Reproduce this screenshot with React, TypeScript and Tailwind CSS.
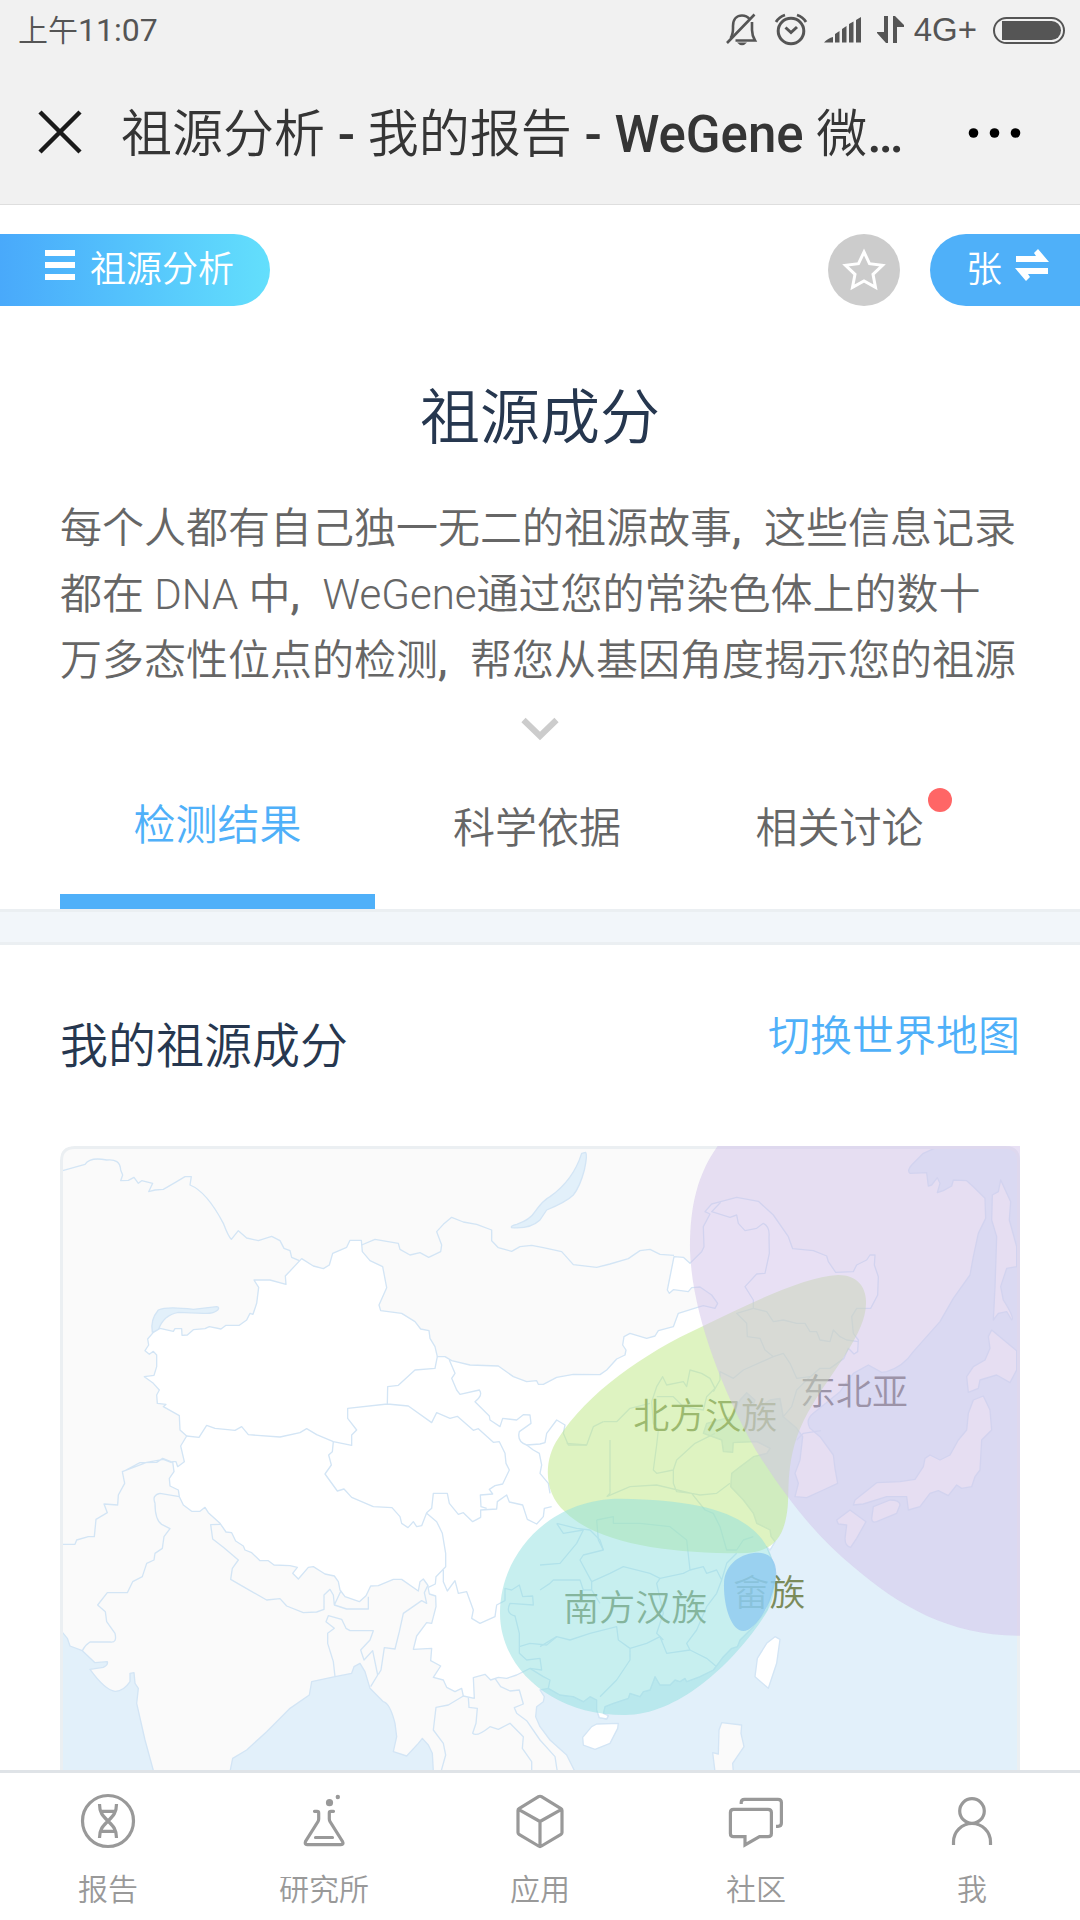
import React from "react";

const LINE = "#d3e5f5";
const SEA = "#e2f0fa";
const LAND = "#fafafa";

const MAINLAND =
  "M20 10H2660V22L2620 40L2585 75Q2570 92 2580 100L2630 98L2635 138L2645 135L2662 113L2670 130L2662 158L2680 152L2705 138L2710 120L2750 122L2770 140L2805 175L2807 235L2785 280L2770 350L2760 405L2710 475L2670 545L2590 635Q2560 680 2510 695L2495 697L2455 675L2410 700L2370 755L2290 820Q2265 840 2280 865L2310 890L2350 945L2355 985L2363 1030L2320 1050L2270 1073L2235 1070L2245 1030L2235 1000L2250 960L2258 890L2240 865L2200 830L2190 775L2160 780L2130 800L2110 795L2115 780L2090 758L2070 780L2045 830L1970 850L1960 880L2015 900L2020 935L2048 937L2050 908L2120 905L2160 925L2150 940L2110 950L2070 980L2045 1000L2042 1040L2080 1080L2110 1120L2120 1150L2160 1170L2163 1190L2175 1205L2160 1230L2150 1220L2170 1270L2178 1305L2150 1410L2110 1460L2070 1500L2062 1520L2045 1525L2020 1550L2005 1570L1990 1590L1950 1610L1910 1625L1905 1615L1890 1625L1875 1620L1860 1635L1830 1635L1815 1610L1800 1650L1780 1655L1770 1670L1740 1660L1735 1675L1690 1690L1665 1700L1660 1720L1675 1727L1670 1737L1648 1733L1640 1710V1680L1620 1670L1600 1685L1570 1670L1530 1665L1495 1645L1470 1650L1483 1670L1480 1685L1460 1700L1457 1730L1470 1760L1500 1800L1550 1845L1575 1895H1150L1147 1840L1135 1815L1117 1795L1105 1810L1070 1848L1030 1835L1040 1790L1035 1750Q1020 1690 1000 1685L960 1645L945 1595L930 1570L912 1580L905 1600L855 1610L785 1625L778 1665L720 1705L650 1775L590 1830L548 1855L540 1895H311L285 1800L260 1690L265 1645L255 1630L252 1598L240 1600V1625Q220 1655 195 1654Q165 1650 120 1588L160 1582Q175 1575 172 1565L135 1568L97 1532L60 1518L52 1495L38 1478H20Z";

const CHINA =
  "M310 577L330 565L370 574L375 566H395L396 586L412 585L430 569L465 566L478 560L513 567L528 556H568L590 540L600 520L609 523L620 490L626 442L612 420L660 420L708 433L706 408L755 356L790 378L820 386L838 375L848 340L890 322L900 301H934L937 335L960 362L998 380L1010 443L987 495L992 512L1055 520L1095 545L1112 567L1137 572L1140 595L1155 620L1162 650H1185L1205 662L1260 675L1345 678L1390 710L1430 725L1460 722L1465 733H1480L1520 712L1570 703L1650 704L1670 690L1700 657L1725 645L1728 630L1718 615L1722 590L1740 580L1790 595L1815 588L1825 572L1870 560L1885 520L1940 503L1960 497L1995 505L2003 490L1985 465L1950 441L1925 443L1915 455L1870 449L1858 460L1852 450L1872 350L1900 352L1920 370L1955 335L1962 320L1960 260L1980 222L1965 215L1985 192L2012 185L2060 172L2125 184L2170 225L2215 290L2228 326L2290 332L2330 348L2335 365L2357 397L2410 395L2420 375L2450 360L2460 345H2475L2473 375L2485 410L2483 465L2462 505H2420L2405 530L2410 580L2425 600L2423 635L2412 642L2395 625L2382 655L2340 685H2310L2270 720L2240 750L2225 800L2200 830L2190 775L2160 780L2130 800L2110 795L2115 780L2090 758L2070 780L2045 830L1970 850L1960 880L2015 900L2020 935L2048 937L2050 908L2120 905L2160 925L2150 940L2110 950L2070 980L2045 1000L2042 1040L2080 1080L2110 1120L2120 1150L2160 1170L2163 1190L2175 1205L2160 1230L2150 1220L2170 1270L2178 1305L2150 1410L2110 1460L2070 1500L2062 1520L2045 1525L2020 1550L2005 1570L1990 1590L1950 1610L1910 1625L1905 1615L1890 1625L1875 1620L1860 1635L1830 1635L1815 1610L1800 1650L1780 1655L1770 1670L1740 1660L1735 1675L1690 1690L1665 1700L1660 1720L1675 1727L1670 1737L1648 1733L1640 1710V1680L1620 1670L1600 1685L1570 1670L1530 1665L1495 1645L1500 1620L1480 1610L1440 1585L1400 1605L1370 1615L1345 1612L1322 1620L1305 1603L1270 1613L1273 1675L1240 1668L1235 1645L1215 1655L1190 1642L1180 1620L1150 1612L1172 1578L1142 1562L1145 1525L1090 1528L1100 1488L1130 1448L1145 1450L1158 1400L1157 1368L1138 1362L1133 1335L1120 1317L1110 1325L1105 1353L1055 1318L1030 1318L985 1337L962 1338L948 1367L928 1385L885 1370L870 1350L865 1325L853 1308L825 1302L790 1280L775 1282L745 1317L728 1300L742 1282L720 1277L672 1275L655 1262H630L605 1238L585 1230L580 1218L557 1203L545 1178L528 1176L510 1150L475 1118L465 1102L450 1114H425L400 1095L388 1070L385 1050L360 1038L358 1015L372 995L368 965L378 965L383 980L403 965L392 918L410 888L390 870L388 827L340 800L348 793L322 790L320 765L328 750L310 730L283 710L312 706L320 680V645L310 634L298 643L285 632L296 615L293 597Z";

const ISLANDS = [
  "M2825 570L2900 632V690L2880 728L2840 705L2790 720L2785 745L2755 757L2750 710L2770 680L2805 660L2820 625L2815 590Z",
  "M2800 768L2820 810L2825 870L2795 900L2790 990L2775 1010L2765 1040L2735 1045L2720 1035L2695 1067L2665 1052L2640 1060L2610 1100L2575 1110L2570 1070H2510L2440 1092L2410 1095L2415 1080L2480 1028L2550 1025L2595 1018L2620 980L2625 955L2640 945L2670 960L2700 945L2725 900L2750 870L2755 820L2770 780Z",
  "M2470 1100L2520 1080Q2550 1080 2550 1095L2540 1120L2480 1145Q2465 1150 2465 1135Z",
  "M2360 1140L2400 1110L2448 1145L2420 1195L2402 1222Q2385 1220 2385 1195L2390 1155L2365 1152Z",
  "M2852 120L2882 185L2878 240L2900 320V380L2870 385L2852 440L2860 480Q2895 535 2885 540L2870 515L2845 520L2830 540L2835 440L2840 290L2825 240L2827 165L2845 155Z",
  "M2015 1748L2075 1755L2073 1780L2082 1820L2048 1870L2050 1895H1995L1988 1838L2005 1842L2007 1770Z",
];

const CHINA_ISLANDS = [
  "M2175 1490L2190 1498L2180 1570L2155 1645L2115 1610L2122 1555L2150 1510Z",
  "M1625 1760L1640 1752L1705 1750L1703 1765L1680 1810L1635 1828L1600 1815L1598 1792Z",
];

const LAKES = [
  "M1607 37Q1613 45 1603 90Q1590 140 1570 165Q1550 185 1490 210L1470 240Q1440 268 1385 263Q1380 258 1400 253Q1440 240 1455 215Q1480 180 1500 170Q1570 120 1595 40Z",
  "M307 577Q300 540 325 510Q350 498 430 508L500 500Q510 502 503 510Q490 522 460 520L385 517Q340 525 325 570Z",
];

const BORDERS = [
  "M38 92L105 73Q120 50 170 60Q210 55 212 90L218 105L212 122L235 121L252 112L265 130L275 122L308 130L296 155L315 150L340 148L380 125L405 110H424L420 135Q470 155 520 250Q535 290 544 298L565 272L590 294L625 302L665 289L690 302L702 325L720 332L725 352L748 362",
  "M935 315L975 298L1045 310L1050 328L1080 345L1110 338L1136 352L1172 335L1175 315L1160 275L1180 253L1205 232L1240 246L1280 253L1325 270V302L1345 323L1385 334L1410 320L1445 316L1480 323L1535 335L1570 374L1640 382L1680 372L1735 356L1770 332L1800 328L1830 343L1872 346",
  "M228 990L270 968L320 967L338 955L368 967M365 968L340 958L290 967L217 995L224 1030L205 1065L203 1095L162 1092L172 1118L138 1138L133 1190L115 1190L80 1200L75 1213H38",
  "M388 1070L330 1060Q305 1065 315 1090Q315 1140 335 1153L360 1166L342 1190L337 1225L315 1240L312 1260L290 1270L277 1310L248 1325L232 1358L172 1358L143 1395L166 1415L170 1445L195 1480Q202 1510 180 1506H120Q105 1515 97 1532",
  "M512 1153L482 1154L488 1197L520 1222L565 1260L547 1285L542 1318L590 1346L650 1380L690 1376L710 1398L760 1418L800 1416L822 1408L822 1365L840 1348L850 1365L853 1395L890 1407H955V1370M873 1352L853 1395",
  "M855 1610L850 1565L833 1510V1480L853 1465L828 1445L835 1427L875 1438L888 1465L900 1472H970L960 1500L932 1530L942 1560L968 1532L983 1605L962 1640M985 1603L993 1590L1003 1523L1035 1527L1048 1475L1060 1420L1115 1382L1130 1390L1123 1358L1134 1335",
  "M1240 1668L1195 1695L1158 1702L1150 1770L1180 1810L1187 1845L1173 1895M1255 1673L1257 1702L1282 1705L1278 1750L1268 1780Q1280 1792 1320 1760L1345 1768L1380 1750L1420 1790L1417 1825L1445 1865V1895M1335 1615L1352 1640L1380 1653L1408 1650L1420 1692L1393 1703L1400 1720L1430 1742L1470 1800L1515 1850L1522 1895",
  "M410 888L447 892L470 856L495 865L555 871L575 860L595 884L690 891L750 878L770 866L800 884L850 905L905 916L905 885L920 870L893 835V805L1012 792L1013 740L1045 736L1095 690L1155 685L1162 650M1012 792L1075 798L1145 848L1160 818L1200 835L1222 829L1270 871L1285 866L1330 907L1348 905L1365 940L1368 970L1378 990L1358 1032L1335 1037L1318 1048L1328 1062L1291 1065L1293 1100L1310 1105",
  "M850 905L847 935L836 945L844 975L825 1002L862 1053L882 1047L905 1072L970 1100L1026 1103L1050 1130L1055 1150L1074 1163L1090 1145L1100 1160L1115 1157L1130 1118L1145 1105L1150 1060L1192 1060L1198 1090L1225 1123L1240 1118L1268 1145L1292 1132V1110L1340 1107L1342 1085L1370 1065L1378 1086L1418 1095L1432 1138L1460 1152L1480 1130L1483 1105L1505 1100",
  "M1198 660L1215 700L1205 715L1220 750L1230 763L1288 750Q1300 765 1275 785L1318 828L1320 840L1350 860L1358 835L1400 840L1420 824L1440 825L1443 850L1408 875Q1400 905 1430 915L1470 912L1485 908L1490 880L1520 840L1545 855L1540 880L1555 915L1610 915L1630 860L1660 845",
  "M1430 915L1450 930L1468 940L1475 975L1470 1000L1495 1030L1500 1060M1130 1120L1160 1145L1177 1180L1187 1240L1187 1280L1158 1310L1156 1332L1135 1342M1180 1290L1180 1325L1192 1353L1215 1322L1225 1360L1250 1355L1270 1410L1265 1435L1290 1450L1335 1430L1340 1395L1365 1382L1365 1345L1385 1350L1408 1335L1418 1370L1448 1368L1450 1395L1380 1390Q1365 1420 1395 1428L1408 1480V1540L1430 1560L1470 1555L1475 1590L1440 1585",
  "M2012 187L1985 215L2040 232L2060 225L2065 250L2085 272L2120 265L2140 250Q2160 260 2157 290L2158 340L2145 400L2120 402L2085 440L2110 480V505L2060 520L2090 550L2092 590L2130 595L2145 630L2170 650L2080 690L2050 715L2010 695V720L1990 755",
  "M2110 505L2150 515L2170 545L2200 540L2240 550L2265 550L2280 575L2300 575L2310 600L2340 605L2350 570L2370 590L2390 600L2425 605M2170 650L2200 640L2220 670L2240 715L2280 710",
  "M1805 785L1820 740L1838 710L1850 735L1900 725L1910 740L1920 690L1955 700L1980 715L1995 745L1970 770L1960 810L1900 800L1870 770L1820 770M1660 845L1700 845L1740 805L1800 790M1550 910L1610 915M1805 785L1810 850L1825 870L1820 915L1810 990L1820 1000L1870 990L1880 960L1935 910L1965 895L1995 880",
  "M1680 900V1060L1670 1070M1870 990L1870 1030L1880 1055L1925 1060L1950 1065L2000 1060L2040 1030M1670 1070L1740 1040L1820 1035L1925 1060L1965 1110L1990 1120L2010 1160L2030 1230L2060 1230L2080 1200L2110 1190",
  "M1520 1150L1580 1165L1620 1170L1650 1200L1660 1230L1600 1245L1590 1260L1625 1325L1625 1350L1650 1390M1520 1150L1540 1180L1600 1170L1580 1210L1530 1270L1470 1275",
  "M1640 1140L1645 1200L1660 1230M1640 1140L1690 1130L1690 1150L1770 1150L1860 1160L1910 1200L1920 1290L1900 1300L1830 1315L1800 1300L1720 1280L1680 1300L1625 1325M1830 1315L1820 1330L1840 1420L1820 1480L1840 1500",
  "M1920 1290L1960 1280L1970 1300L2000 1290L2015 1320L2030 1270L2060 1240M2015 1320L2000 1360L1970 1400L1940 1470L1910 1510L1920 1530L1970 1555L2000 1580M1470 1520L1520 1490L1560 1500L1620 1480L1700 1460L1705 1500L1740 1525L1790 1510L1830 1490L1850 1540L1920 1530M1740 1525L1740 1560L1700 1620L1650 1670",
  "M1470 1350L1500 1330L1510 1320L1590 1320L1600 1350L1625 1350M1408 1520L1440 1510L1490 1515L1520 1490M2240 900L2260 880L2313 872",
];

function AncestryMap() {
  return (
    <svg
      viewBox="30 18 2880 1872"
      className="block w-full"
      role="img"
      aria-label="祖源成分地图"
      fontFamily="'Noto Sans CJK SC', sans-serif"
    >
      <rect x="30" y="18" width="2880" height="1900" fill={SEA} />
      <g stroke={LINE} strokeWidth="4" strokeLinejoin="round">
        <path d={MAINLAND} fill={LAND} />
        {ISLANDS.map((d) => (
          <path key={d} d={d} fill={LAND} />
        ))}
        {LAKES.map((d) => (
          <path key={d} d={d} fill={SEA} />
        ))}
        <path d={CHINA} fill="#fff" />
        {CHINA_ISLANDS.map((d) => (
          <path key={d} d={d} fill="#fff" />
        ))}
        {BORDERS.map((d) => (
          <path key={d} d={d} fill="none" />
        ))}
      </g>
      <path
        d="M34.500 1900V62Q34.500 22.500 74 22.500H2866Q2905.500 22.500 2905.500 62V1900"
        fill="none"
        stroke="#ebeff2"
        strokeWidth="9"
      />
      <path d="M30 18H74Q30 18 30 62ZM2910 18H2866Q2910 18 2910 62Z" fill="#fff" />
      <g fontSize="108" fill="#7b8b5b" fontWeight="350">
        <text x="1750" y="866">北方汉族</text>
        <text x="1540" y="1444">南方汉族</text>
        <text x="2050" y="1397">畲族</text>
        <text x="2250" y="795" fill="#676567">东北亚</text>
      </g>
      <path
        d="M2365 405C2420 405 2450 440 2448 490C2448 580 2350 690 2290 790C2200 930 2220 1050 2213 1100C2205 1180 2180 1240 2070 1240C1850 1240 1640 1210 1545 1115C1480 1060 1480 960 1525 895C1610 760 1780 640 1955 560C2100 490 2260 410 2365 405Z"
        fill="#bde783"
        fillOpacity="0.5"
      />
      <path
        d="M1710 1076C1930 1080 2060 1110 2130 1190C2190 1260 2190 1370 2135 1440C2040 1580 1880 1725 1725 1725C1500 1725 1350 1580 1350 1420C1350 1240 1500 1076 1710 1076Z"
        fill="#8fdfdf"
        fillOpacity="0.5"
      />
      <path
        d="M2003 18C1930 120 1920 230 1920 330C1925 500 2000 720 2117 930C2215 1085 2310 1200 2410 1280C2550 1400 2700 1487 2910 1487V18Z"
        fill="#d1c1e9"
        fillOpacity="0.5"
      />
      <path
        d="M2125 1238C2165 1238 2182 1270 2178 1310C2170 1390 2115 1473 2080 1473C2045 1473 2020 1400 2022 1330C2024 1270 2075 1238 2125 1238Z"
        fill="#8bc7f0"
        fillOpacity="0.75"
      />
    </svg>
  );
}

function StatusIcons() {
  return (
    <div className="flex items-center text-[#555]">
      <svg width="32" height="34" viewBox="0 0 32 34" fill="none" stroke="currentColor" strokeWidth="2.6">
        <path d="M4.500 25C7.500 21 7 18 7 13C7 6 11 2.500 16 2.500C19 2.500 21.500 3.500 23.500 6" />
        <path d="M26 9V17C26 21 27 24 29 27.500H9.500M1 30L28.500 1.500" />
        <path d="M11 29.500H21Q16 35 11 29.500Z" fill="currentColor" stroke="none" />
      </svg>
      <svg className="ml-4" width="34" height="34" viewBox="0 0 34 34" fill="none" stroke="currentColor">
        <circle cx="17" cy="18" r="12.800" strokeWidth="3" />
        <path d="M11.500 14.500L17 19.500L23 14" strokeWidth="3" />
        <path d="M2 9Q5 4 11 2M23 2Q29 4 32 9" strokeWidth="2.800" />
      </svg>
      <svg className="ml-4" width="38" height="28" viewBox="0 0 38 28" fill="currentColor">
        <path d="M0 26.500Q4 22 9 21V26.500ZM11 18L15.500 15V26.500H11ZM18 13L22.500 10V26.500H18ZM25 8L29.500 5.500V26.500H25ZM32 4L37 1V26.500H32Z" />
      </svg>
      <svg className="ml-[14px]" width="30" height="28" viewBox="0 0 30 28" fill="currentColor">
        <path d="M8 0H12V27H10L1 17V16H8ZM17 0H19L28 9V11H21V27H17Z" />
      </svg>
      <span className="ml-2 font-['Liberation_Sans',sans-serif] text-[33px] leading-9">4G+</span>
      <span className="ml-4 flex h-[27px] w-[72px] rounded-full border-2 border-[#555] py-0.5 pr-0.5 pl-[7px]">
        <span className="flex-1 rounded-l-sm rounded-r-full bg-[#555]" />
      </span>
    </div>
  );
}

function Comma() {
  return <span className="inline-block w-8 font-medium">,</span>;
}

const NAV = [
  {
    label: "报告",
    icon: (
      <>
        <circle cx="30" cy="30" r="25.500" />
        <path d="M21.500 13C21.500 22 25 25 30 30S38.500 38 38.500 47M38.500 13C38.500 22 35 25 30 30S21.500 38 21.500 47M23 20.300H37M23 40.300H37" />
      </>
    ),
  },
  {
    label: "研究所",
    icon: (
      <>
        <path
          d="M20.500 20.300H23Q24.700 20.300 24.700 22V28Q24.700 29 24 30.500L11.500 50.500Q10.500 53.700 13 53.700H47Q50 53.700 48.500 50.500L36 30.500Q35.300 29 35.300 28V22Q35.300 20.300 37 20.300H39.500M21.500 46.500H38.500"
          strokeLinecap="round"
        />
        <circle cx="35.500" cy="11.700" r="3.600" fill="currentColor" stroke="none" />
        <circle cx="43.800" cy="6" r="2.200" fill="currentColor" stroke="none" />
      </>
    ),
  },
  {
    label: "应用",
    icon: (
      <path
        d="M8 19.500Q8 18.300 9 17.700L28.500 5.700Q30 4.800 31.500 5.700L51 17.700Q52 18.300 52 19.500V41.500Q52 42.700 51 43.300L31.500 55Q30 56 28.500 55L9 43.300Q8 42.700 8 41.500ZM8.500 18.300L30 30.500L51.500 18.300M30 30.500V56"
        strokeLinejoin="round"
      />
    ),
  },
  {
    label: "社区",
    icon: (
      <path d="M7.500 18.300H42Q45.400 18.300 45.400 21.500V42.500Q45.400 45.700 42 45.700H33.500L19 54V45.700H7.500Q4.400 45.700 4.400 42.500V21.500Q4.400 18.300 7.500 18.300ZM15.200 13V11.500Q15.200 8.300 18.500 8.300H52Q55.400 8.300 55.400 11.500V32Q55.400 35.300 52 35.300H50" />
    ),
  },
  {
    label: "我",
    icon: (
      <>
        <circle cx="30" cy="20" r="12.300" />
        <path d="M11.500 54V51A18.500 18.500 0 0 1 48.500 51V54" />
      </>
    ),
  },
];

export default function App() {
  return (
    <div
      lang="zh-CN"
      className="flex h-screen w-full flex-col overflow-hidden bg-white font-['Roboto','Noto_Sans_CJK_SC',sans-serif] font-[350]"
    >
      <header className="shrink-0 border-b border-[#dedede] bg-[#f1f1f1]">
        <div className="flex h-15 items-center justify-between pr-[15px] pl-[18px]">
          <span className="text-[30px] leading-9 text-[#555]">
            上午<span className="text-[32px] font-normal">11:07</span>
          </span>
          <StatusIcons />
        </div>
        <div className="flex h-36 items-center pr-[58px] pl-[38px]">
          <button type="button" aria-label="关闭" className="shrink-0">
            <svg width="44" height="44" viewBox="0 0 44 44" fill="none" stroke="#1a1a1a" strokeWidth="4.500">
              <path d="M2 2L42 42M42 2L2 42" />
            </svg>
          </button>
          <h1 className="ml-[39px] flex-1 pt-1.5 text-[51px] leading-[72px] font-medium whitespace-nowrap text-[#353535]">
            <span className="font-[350]">祖源分析</span> - <span className="font-[350]">我的报告</span> - WeGene{" "}
            <span className="font-[350]">微</span>…
          </h1>
          <button type="button" aria-label="更多" className="shrink-0">
            <svg width="54" height="20" viewBox="0 0 54 20">
              <circle cx="5.500" cy="11" r="4.800" />
              <circle cx="26.500" cy="11" r="4.800" />
              <circle cx="47.500" cy="11" r="4.800" />
            </svg>
          </button>
        </div>
      </header>

      <main className="min-h-0 flex-1 overflow-hidden">
        <div className="flex items-center pt-[29px] text-4xl text-white">
          <button
            type="button"
            className="flex h-18 w-[270px] items-center gap-[15px] rounded-r-full bg-linear-to-r from-[#49a9fb] to-[#63dffc] pl-[45px]"
          >
            <svg width="30" height="40" viewBox="0 0 30 40" fill="#fff">
              <path d="M0 0H30V6H0ZM0 12H30V18H0ZM0 24H30V30H0Z" />
            </svg>
            <span>祖源分析</span>
          </button>
          <button
            type="button"
            aria-label="收藏"
            className="ml-auto flex size-18 items-center justify-center rounded-full bg-[#ccc]"
          >
            <svg width="48" height="48" viewBox="0 0 48 48" fill="none" stroke="#fff" strokeWidth="3">
              <path d="M24 6L29.500 17.700L42.500 19.300L33 28.300L35.500 41.300L24 35L12.500 41.300L15 28.300L5.500 19.300L18.500 17.700Z" />
            </svg>
          </button>
          <button
            type="button"
            className="ml-[30px] flex h-18 w-[150px] items-center gap-3 rounded-l-full bg-[#4fb0f9] pl-9"
          >
            <span>张</span>
            <svg width="36" height="42" viewBox="0 0 36 42" fill="#fff">
              <path d="M2 7H22L20 4L24 0L35 13H2ZM34 25H14L16 28L12 32L1 19H34Z" />
            </svg>
          </button>
        </div>

        <section className="px-[60px]">
          <h2 className="mt-[73px] text-center text-6xl leading-20 text-[#26374f]">祖源成分</h2>
          <p className="mt-[37px] text-[42px] leading-[66px] whitespace-nowrap text-[#666]">
            每个人都有自己独一无二的祖源故事<Comma />这些信息记录
            <br />
            都在 <span className="font-light">DNA</span> 中<Comma />
            <span className="font-light">WeGene</span>通过您的常染色体上的数十
            <br />
            万多态性位点的检测<Comma />帮您从基因角度揭示您的祖源
          </p>
          <button type="button" aria-label="展开" className="mt-[17px] flex h-9 w-full items-center justify-center">
            <svg width="38" height="24" viewBox="0 0 38 24" fill="none" stroke="#ccc" strokeWidth="6">
              <path d="M2.500 3L19 19L35.500 3" />
            </svg>
          </button>
          <div role="tablist" className="flex h-[162px] text-[42px] text-[#666]">
            <button
              type="button"
              role="tab"
              aria-selected="true"
              className="w-[315px] border-b-[15px] border-[#4fb0f9] pt-2.5 text-[#4fb0f9]"
            >
              检测结果
            </button>
            <button type="button" role="tab" aria-selected="false" className="w-[324px]">
              科学依据
            </button>
            <button type="button" role="tab" aria-selected="false" className="flex-1 pr-10">
              <span className="relative">
                相关讨论
                <span className="absolute -top-4 -right-7 size-6 rounded-full bg-[#ff6666]" />
              </span>
            </button>
          </div>
        </section>

        <div className="h-9 border-y-3 border-[#ebeff2] bg-[#f2f6fa]" />

        <section className="px-[60px] pt-15">
          <div className="flex items-start justify-between">
            <h2 className="text-5xl leading-[84px] text-[#26374f]">我的祖源成分</h2>
            <a href="#world" className="text-[42px] leading-16 text-[#4fb0f9]">
              切换世界地图
            </a>
          </div>
          <div className="mt-[57px]">
            <AncestryMap />
          </div>
        </section>
      </main>

      <nav className="flex h-[150px] shrink-0 border-t-3 border-[#dfe3e7] bg-white pt-[18px]">
        {NAV.map((item) => (
          <a key={item.label} href="#nav" className="flex flex-1 flex-col items-center text-[#999]">
            <svg width="60" height="60" viewBox="0 0 60 60" fill="none" stroke="currentColor" strokeWidth="3.200">
              {item.icon}
            </svg>
            <span className="mt-[19px] text-3xl leading-10">{item.label}</span>
          </a>
        ))}
      </nav>
    </div>
  );
}
